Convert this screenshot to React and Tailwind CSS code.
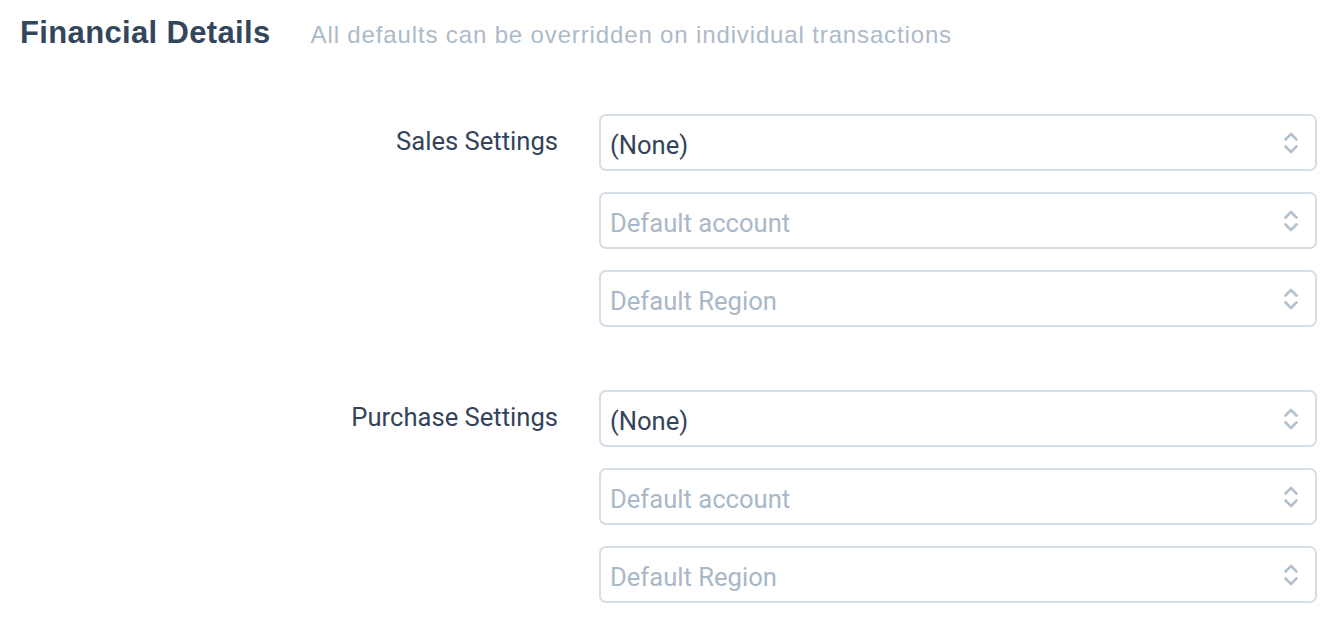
import React from "react";

function Chevrons() {
  return (
    <svg width="16" height="24" viewBox="0 0 16 24" fill="none" className="shrink-0">
      <path d="M2.5 8.5 L8 3 L13.5 8.5" stroke="#b4c0cd" strokeWidth="2.6" strokeLinecap="round" strokeLinejoin="round" />
      <path d="M2.5 15.5 L8 21 L13.5 15.5" stroke="#b4c0cd" strokeWidth="2.6" strokeLinecap="round" strokeLinejoin="round" />
    </svg>
  );
}

function SelectBox({ value, placeholder }) {
  return (
    <div className="h-[57px] border-2 border-[#d5dde6] rounded-[7px] bg-white flex items-center pl-[9px] pr-[16px]">
      <span
        className={
          "flex-1 pt-[5px] leading-[32px] text-[25.6px] " +
          (value ? "text-[#33445a]" : "text-[#a9b8c8]")
        }
        style={{ fontFamily: "Roboto, sans-serif" }}
      >
        {value || placeholder}
      </span>
      <Chevrons />
    </div>
  );
}

function Group({ label }) {
  return (
    <div className="flex">
      <div
        className="w-[558px] shrink-0 text-right pt-[11px] leading-[32px] text-[25.6px] text-[#33445a]"
        style={{ fontFamily: "Roboto, sans-serif" }}
      >
        {label}
      </div>
      <div className="flex-1 ml-[41px] mr-[25px] flex flex-col gap-[21px]">
        <SelectBox value="(None)" />
        <SelectBox placeholder="Default account" />
        <SelectBox placeholder="Default Region" />
      </div>
    </div>
  );
}

export default function App() {
  return (
    <div className="w-[1342px] h-[632px] bg-white overflow-hidden">
      <div className="flex items-baseline pl-[20px] pt-[15px]" style={{ fontFamily: "'Liberation Sans', Arial, sans-serif" }}>
        <h1 className="text-[31px] leading-[36px] font-bold tracking-[0.35px] text-[#34465b]">Financial Details</h1>
        <p className="ml-[40px] text-[24px] leading-[36px] tracking-[0.86px] text-[#acbac9]">
          All defaults can be overridden on individual transactions
        </p>
      </div>
      <div className="mt-[61px] flex flex-col gap-[63px]">
        <Group label="Sales Settings" />
        <Group label="Purchase Settings" />
      </div>
    </div>
  );
}
